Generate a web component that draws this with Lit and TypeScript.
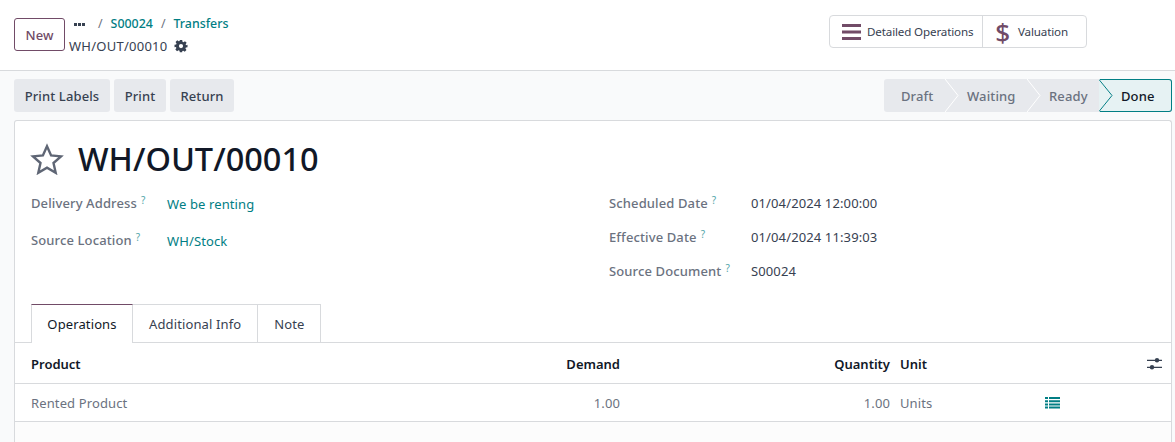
import { LitElement, html, css, svg } from "lit";
import { customElement } from "lit/decorators.js";

const gear = svg`<svg width="14" height="14" viewBox="0 0 14 14"><path fill="#374151" fill-rule="evenodd" d="M5.8 1h2.4l.3 1.7 1 .45 1.45-1 1.7 1.7-1 1.45.4 1L13.5 5.8v2.4l-1.65.3-.4 1 1 1.45-1.7 1.7-1.45-1-1 .4L8.2 13.3H5.8l-.3-1.65-1-.4-1.45 1-1.7-1.7 1-1.45-.4-1L.5 8.2V5.8l1.65-.3.4-1-1-1.45 1.7-1.7 1.45 1 1-.45zM7 5a2.1 2.1 0 1 0 0 4.2A2.1 2.1 0 0 0 7 5z"/></svg>`;
const star = svg`<svg width="34" height="32" viewBox="0 0 34 32"><path fill="none" stroke="#5f6675" stroke-width="2.4" stroke-linejoin="miter" d="M17 3.2l4.1 9.2 9.9 1-7.5 6.6 2.2 9.8L17 24.7l-8.7 5.1 2.2-9.8L3 13.4l9.9-1z"/></svg>`;
const bars = svg`<svg width="19" height="16" viewBox="0 0 19 16"><path fill="#714b67" d="M0 0h19v3H0zM0 6.5h19v3H0zM0 13h19v3H0z"/></svg>`;
const sliders = svg`<svg width="15" height="14" viewBox="0 0 15 14"><path fill="none" stroke="#374151" stroke-width="1.2" d="M0 3.3h15M0 10.3h15"/><circle cx="10" cy="3.3" r="2.2" fill="#374151"/><circle cx="5" cy="10.3" r="2.2" fill="#374151"/></svg>`;
const list = svg`<svg width="15" height="12" viewBox="0 0 15 12"><path fill="#017e84" d="M0 0h3v2H0zM4 0h11v2H4zM0 3.2h3v2H0zM4 3.2h11v2H4zM0 6.4h3v2H0zM4 6.4h11v2H4zM0 9.6h3v2H0zM4 9.6h11v2H4z"/></svg>`;
const dots = svg`<svg width="11" height="3" viewBox="0 0 11 3"><path fill="#374151" d="M0 0h3v3H0zM4 0h3v3H4zM8 0h3v3H8z"/></svg>`;

@customElement("app-root")
export class AppRoot extends LitElement {
  static styles = css`
    :host { display: block; width: 1175px; height: 442px; overflow: hidden; background: #f9fafb; font-family: "Noto Sans", "Open Sans", sans-serif; font-size: 13px; letter-spacing: 0.12px; color: #374151; }
    .top { height: 70px; background: #fff; border-bottom: 1px solid #d8dadd; display: flex; padding: 0 88px 0 14px; }
    .new { margin-top: 18px; width: 51px; height: 33px; box-sizing: border-box; border: 1px solid #714b67; border-radius: 3px; display: flex; align-items: center; justify-content: center; color: #714b67; font-weight: 500; }
    .crumbs { margin-left: 4px; padding-top: 13px; flex: 1; }
    .crumb-line { display: flex; align-items: center; height: 20px; font-size: 12.4px; letter-spacing: 0; font-weight: 500; color: #017e84; }
    .dots { display: flex; width: 29px; padding: 2px 0 0 5px; box-sizing: border-box; }
    .sep { color: #6b7280; font-weight: 400; }
    .s1 { margin: 0 8px 0 0; }
    .s2 { margin: 0 8px; }
    .rec { display: flex; align-items: center; gap: 7px; height: 22px; margin-top: 2px; letter-spacing: 0.25px; }
    .stats { margin-top: 15px; height: 33px; width: 258px; box-sizing: border-box; border: 1px solid #d8dadd; border-radius: 4px; display: flex; font-size: 11.6px; letter-spacing: -0.14px; }
    .stat { display: flex; align-items: center; }
    .stat1 { width: 153px; box-sizing: border-box; padding-left: 12px; gap: 6px; border-right: 1px solid #d8dadd; }
    .stat2 { padding-left: 14px; gap: 10px; }
    .dollar { color: #714b67; font-size: 26px; font-weight: 500; line-height: 1; width: 11px; display: flex; justify-content: center; }
    .bar { height: 49px; display: flex; justify-content: space-between; padding: 8px 3px 0 14px; box-sizing: border-box; }
    .actions { display: flex; gap: 4px; }
    .btn { height: 33px; background: #e7e9ed; border-radius: 3px; display: flex; align-items: center; justify-content: center; font-weight: 500; }
    .b1 { width: 96px; }
    .b2 { width: 52px; }
    .b3 { width: 64px; }
    .status { display: flex; height: 33px; background: #e7e9ed; border-radius: 3px; color: #6b7280; font-weight: 500; }
    .st { position: relative; display: flex; align-items: center; height: 33px; box-sizing: border-box; padding-left: 22px; }
    .st svg { position: absolute; top: 0; right: -14px; z-index: 1; }
    .s-draft { width: 61px; padding-left: 17px; }
    .s-waiting { width: 82px; }
    .s-ready { width: 72px; }
    .done { background: #e6f2f3; color: #111827; border: 1px solid #017e84; border-left: none; border-radius: 0 3px 3px 0; padding-left: 22px; width: 73px; }
    .done svg { left: 0; right: auto; top: -1px; }
    .card { margin-left: 14px; margin-right: 3px; background: #fff; border: 1px solid #d8dadd; border-bottom: none; border-radius: 3px 3px 0 0; height: 321px; display: flex; flex-direction: column; }
    .head { display: flex; align-items: center; gap: 14px; padding: 20px 0 0 15px; height: 36px; }
    h1 { margin: 0; font-size: 32.5px; letter-spacing: 0; font-weight: 500; color: #111827; line-height: 36px; }
    .groups { display: grid; grid-template-columns: 578px 1fr; padding: 0 0 0 16px; margin-top: 9px; height: 110px; }
    .fld { display: flex; align-items: center; height: 34px; }
    .g1 { margin-top: -2px; }
    .g1 .fld { height: 37px; }
    .lbl { color: #6b7280; font-weight: 500; }
    .q { color: #017e84; font-size: 10px; opacity: .7; position: relative; top: -4px; margin-left: 4px; }
    .g1 .lbl-w { width: 136px; }
    .g2 .lbl-w { width: 142px; }
    .link { color: #017e84; padding-top: 2px; }
    .tabs { display: flex; padding-left: 16px; height: 38px; border-bottom: 1px solid #d8dadd; margin-top: 8px; }
    .tab { height: 38px; box-sizing: border-box; padding: 0 16px; display: flex; align-items: center; border: 1px solid #d8dadd; border-left: none; border-bottom: none; }
    .tab.on { background: #fff; height: 39px; color: #111827; border-left: 1px solid #d8dadd; border-top: 1px solid #714b67; width: 102px; justify-content: center; padding: 0; }
    .row { display: grid; grid-template-columns: 16px 419px 170px 270px 155px 102px 25px; align-items: center; border-bottom: 1px solid #d8dadd; }
    .hd { height: 40px; padding-top: 1px; box-sizing: border-box; height: 41px; font-weight: 600; color: #111827; letter-spacing: 0; }
    .bd { height: 38px; box-sizing: border-box; color: #6b7280; }
    .r { text-align: right; }
    .u { padding-left: 10px; }
    .ico { display: flex; }
    .foot { flex: 1; background: #fcfcfc; }
  `;

  render() {
    const steps: [string, string][] = [["Draft", "s-draft"], ["Waiting", "s-waiting"], ["Ready", "s-ready"]];
    return html`
      <div class="top">
        <div class="new">New</div>
        <div class="crumbs">
          <div class="crumb-line"><span class="dots">${dots}</span><span class="sep s1">/</span><span>S00024</span><span class="sep s2">/</span><span>Transfers</span></div>
          <div class="rec"><span>WH/OUT/00010</span>${gear}</div>
        </div>
        <div class="stats">
          <div class="stat stat1">${bars}<span>Detailed Operations</span></div>
          <div class="stat stat2"><span class="dollar">$</span><span>Valuation</span></div>
        </div>
      </div>
      <div class="bar">
        <div class="actions"><div class="btn b1">Print Labels</div><div class="btn b2">Print</div><div class="btn b3">Return</div></div>
        <div class="status">
          ${steps.map(([t, c]) => html`<div class="st ${c}">${t}<svg width="14" height="33" viewBox="0 0 14 33"><path d="M0 0l13 16.5L0 33" fill="none" stroke="#fff"/></svg></div>`)}
          <div class="st done"><svg width="14" height="33" viewBox="0 0 14 33"><path d="M0 0l13 16.5L0 33z" fill="#f9fafb"/><path d="M0 0.5l13 16L0 32.5" fill="#e6f2f3" stroke="#017e84"/></svg>Done</div>
        </div>
      </div>
      <div class="card">
        <div class="head">${star}<h1>WH/OUT/00010</h1></div>
        <div class="groups">
          <div class="g1">
            <div class="fld"><div class="lbl-w"><span class="lbl">Delivery Address</span><span class="q">?</span></div><span class="link">We be renting</span></div>
            <div class="fld"><div class="lbl-w"><span class="lbl">Source Location</span><span class="q">?</span></div><span class="link">WH/Stock</span></div>
          </div>
          <div class="g2">
            <div class="fld"><div class="lbl-w"><span class="lbl">Scheduled Date</span><span class="q">?</span></div><span>01/04/2024 12:00:00</span></div>
            <div class="fld"><div class="lbl-w"><span class="lbl">Effective Date</span><span class="q">?</span></div><span>01/04/2024 11:39:03</span></div>
            <div class="fld"><div class="lbl-w"><span class="lbl">Source Document</span><span class="q">?</span></div><span>S00024</span></div>
          </div>
        </div>
        <div class="tabs"><div class="tab on">Operations</div><div class="tab">Additional Info</div><div class="tab">Note</div></div>
        <div class="row hd"><span></span><span>Product</span><span class="r">Demand</span><span class="r">Quantity</span><span class="u">Unit</span><span></span><span class="ico">${sliders}</span></div>
        <div class="row bd"><span></span><span>Rented Product</span><span class="r">1.00</span><span class="r">1.00</span><span class="u">Units</span><span class="ico">${list}</span><span></span></div>
        <div class="foot"></div>
      </div>
    `;
  }
}
